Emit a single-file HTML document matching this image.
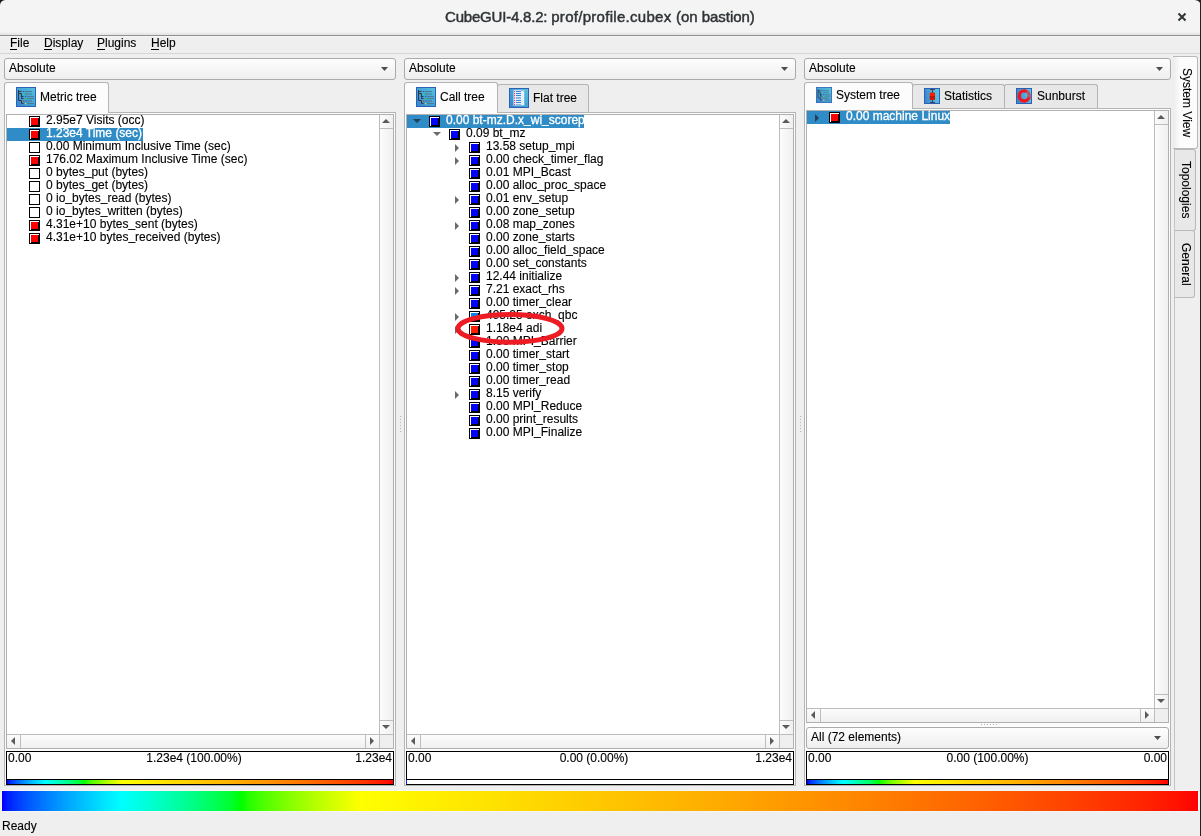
<!DOCTYPE html><html><head><meta charset="utf-8"><title>CubeGUI-4.8.2: prof/profile.cubex (on bastion)</title><style>
*{box-sizing:border-box;margin:0;padding:0}
html,body{width:1201px;height:836px;overflow:hidden;background:#efefef}
body{position:relative;font-family:"Liberation Sans",sans-serif;font-size:12px;color:#000;line-height:13px;-webkit-text-stroke:0.12px #000}
.a{position:absolute}
.t{position:absolute;white-space:nowrap}
#title{left:0;top:0;width:1201px;height:35px;background:linear-gradient(#f4f4f4 0,#f4f4f4 32px,#ececec 33px,#e3e3e3 35px)}
#titleline{left:0;top:35px;width:1201px;height:2px;background:linear-gradient(#91918d 0,#91918d 1px,#f5f5f5 1px)}
#titletxt{left:445px;top:8px;font-size:15px;line-height:18px;color:#2e3436;-webkit-text-stroke:0.45px #2e3436}
#menuline{left:0;top:53px;width:1200px;height:1px;background:#d6d6d6}
.menu{top:36px;font-size:12px;line-height:14px}
.menu u{text-decoration:none;position:relative}
.menu u::after{content:'';position:absolute;left:0;width:min(100%,8px);top:13px;height:1px;background:#000}
#w{position:absolute;left:0;top:0;width:1201px;height:836px;will-change:transform}
.combo{height:22px;border:1px solid #aaa;border-radius:3px;background:linear-gradient(#fefefe,#eeeeee)}
.combo span{position:absolute;left:4px;top:2px;line-height:14px}
.pane{border:1px solid #b4b4b4;background:#fcfcfc}
.frame{border:1px solid #b0b0b0;background:#fff}
.tab{border:1px solid #b4b4b4;border-bottom:none;border-radius:3px 3px 0 0}
.tab.sel{background:#fcfcfc}
.tab.un{background:#e8e8e8}
.row{position:absolute;height:13px;white-space:nowrap;line-height:13px}
.row i{font-style:normal;position:relative;top:-1px}
.hl{position:absolute;height:13px;background:#308cc6}
.ic{position:absolute;width:11px;height:11px;background:#000}
.ic i{position:absolute;left:1px;top:1px;width:9px;height:9px;background:#fff}
.ic b{position:absolute;left:2px;top:2px;width:8px;height:8px;border-right:1px solid #000;border-bottom:1px solid #000}
.vbox{border:1px solid #000;background:#fff}
.sb{background:linear-gradient(90deg,#fcfcfc,#f0f0f0)}
.sbh{background:linear-gradient(#fcfcfc,#f0f0f0)}
.ln{position:absolute;background:#bdbdbd}
.grad{background:linear-gradient(90deg,#0000ff 0%,#001dff 0.5%,#0031ff 1%,#0041ff 1.5%,#0050ff 2%,#005eff 2.5%,#006bff 3%,#0078ff 3.5%,#0084ff 4%,#0090ff 4.5%,#009bff 5%,#00a6ff 5.5%,#00b1ff 6%,#00bbff 6.5%,#00c5ff 7%,#00cfff 7.5%,#00d9ff 8%,#00e3ff 8.5%,#00ecff 9%,#00f6ff 9.5%,#00ffff 10%,#00fff6 10.5%,#00ffec 11%,#00ffe3 11.5%,#00ffd9 12%,#00ffcf 12.5%,#00ffc5 13%,#00ffbb 13.5%,#00ffb1 14%,#00ffa6 14.5%,#00ff9b 15%,#00ff90 15.5%,#00ff84 16%,#00ff78 16.5%,#00ff6b 17%,#00ff5e 17.5%,#00ff50 18%,#00ff41 18.5%,#00ff31 19%,#00ff1d 19.5%,#00ff00 20%,#1dff00 20.5%,#31ff00 21%,#41ff00 21.5%,#50ff00 22%,#5eff00 22.5%,#6bff00 23%,#78ff00 23.5%,#84ff00 24%,#90ff00 24.5%,#9bff00 25%,#a6ff00 25.5%,#b1ff00 26%,#bbff00 26.5%,#c5ff00 27%,#cfff00 27.5%,#d9ff00 28%,#e3ff00 28.5%,#ecff00 29%,#f6ff00 29.5%,#ffff00 30%,#fffb00 31.4%,#fff800 32.8%,#fff400 34.2%,#fff000 35.6%,#ffec00 37%,#ffe900 38.4%,#ffe500 39.8%,#ffe100 41.2%,#ffdd00 42.6%,#ffd900 44%,#ffd500 45.4%,#ffd100 46.8%,#ffcd00 48.2%,#ffc900 49.6%,#ffc500 51%,#ffc100 52.4%,#ffbd00 53.8%,#ffb900 55.2%,#ffb500 56.6%,#ffb100 58%,#ffac00 59.4%,#ffa800 60.8%,#ffa400 62.2%,#ff9f00 63.6%,#ff9b00 65%,#ff9600 66.4%,#ff9200 67.8%,#ff8d00 69.2%,#ff8900 70.6%,#ff8400 72%,#ff7f00 73.4%,#ff7a00 74.8%,#ff7500 76.2%,#ff7000 77.6%,#ff6b00 79%,#ff6600 80.4%,#ff6100 81.8%,#ff5b00 83.2%,#ff5600 84.6%,#ff5000 86%,#ff4a00 87.4%,#ff4400 88.8%,#ff3e00 90.2%,#ff3700 91.6%,#ff3100 93%,#ff2900 94.4%,#ff2200 95.8%,#ff1900 97.2%,#ff0f00 98.6%,#ff0000 100%)}
</style></head><body><div id="w">
<div class="a" id="title"></div><div class="a" id="titleline"></div>
<div class="t" id="titletxt"><span style="letter-spacing:-0.2px">CubeGUI-4.8.2: </span><span style="letter-spacing:0.29px">prof/profile.cubex </span><span style="letter-spacing:-0.03px">(on bastion)</span></div>
<svg class="a" style="left:1176px;top:11px" width="12" height="12" viewBox="0 0 12 12"><path d="M2.5 2.5L9.5 9.5M9.5 2.5L2.5 9.5" stroke="#2e3436" stroke-width="2" stroke-linecap="butt" fill="none"/></svg>
<svg class="a" style="left:0;top:0" width="6" height="6"><path d="M0 0H5.2A5.2 5.2 0 0 0 0 5.2Z" fill="#15191b"/></svg>
<svg class="a" style="left:1194px;top:0" width="7" height="7"><path d="M7 0H0.6A6.4 6.4 0 0 1 7 6.4Z" fill="#1e2426"/></svg>
<div class="a" style="left:1200px;top:0;width:1px;height:836px;background:#1e2426"></div>
<div class="t menu" style="left:10px"><u>F</u>ile</div>
<div class="t menu" style="left:44px"><u>D</u>isplay</div>
<div class="t menu" style="left:97px"><u>P</u>lugins</div>
<div class="t menu" style="left:151px"><u>H</u>elp</div>
<div class="a" id="menuline"></div>
<div class="a combo" style="left:4px;top:58px;width:392px"><span>Absolute</span></div><svg class="a" style="left:381px;top:67px" width="7" height="4"><path d="M0 0H7 L3.5 4 Z" fill="#4e4e4e"/></svg>
<div class="a pane" style="left:4px;top:112px;width:392px;height:674px"></div>
<div class="a tab sel" style="left:4px;top:82px;width:105px;height:31px"></div>
<svg class="a" style="left:16px;top:87px" width="20" height="20" viewBox="0 0 20 20">
<defs><linearGradient id="ga" x1="0" y1="1" x2="1" y2="0"><stop offset="0" stop-color="#3584cf"/><stop offset="1" stop-color="#55c3da"/></linearGradient></defs>
<rect x="0.5" y="0.5" width="19" height="19" fill="url(#ga)" stroke="#2d5fb6"/>
<path d="M2.5 3V13.5H5.5V16.5H7.5 M2.5 4.5H5.5 M2.5 6.5H5.5V11.5H7.5 M5.5 9.5H7.5" stroke="#2f3a46" stroke-width="1" fill="none"/>
<path d="M9 4.5H16 M9 7H16 M11 9.5H18 M11 11.5H18 M9 14H16 M11 16.5H18" stroke="#4d7d92" stroke-width="1" fill="none"/>
<rect x="7" y="4" width="1.2" height="1.2" fill="#3050e0"/><rect x="7" y="6.2" width="1.4" height="1.6" fill="#30e060"/>
<rect x="9" y="9" width="1.2" height="1.2" fill="#3050e0"/><rect x="9" y="11" width="1.6" height="1.4" fill="#20e040"/>
<rect x="7" y="13.4" width="1.2" height="1.4" fill="#d04050"/><rect x="9" y="16" width="1.4" height="1.4" fill="#e0d040"/>
</svg>
<div class="t" style="left:40px;top:90px;line-height:14px">Metric tree</div>
<div class="a frame" style="left:6px;top:114px;width:388px;height:635px"></div>
<div class="a sb" style="left:380px;top:115px;width:13px;height:619px"></div><div class="ln" style="left:379px;top:115px;width:1px;height:619px"></div><div class="ln" style="left:380px;top:128px;width:13px;height:1px"></div><div class="ln" style="left:380px;top:720px;width:13px;height:1px"></div><svg class="a" style="left:382px;top:119px" width="8" height="4"><path d="M0 4 H8 L4 0 Z" fill="#5a5a5a"/></svg><svg class="a" style="left:382px;top:725px" width="8" height="4"><path d="M0 0H8 L4 4 Z" fill="#5a5a5a"/></svg>
<div class="a sbh" style="left:7px;top:735px;width:373px;height:13px"></div><div class="ln" style="left:7px;top:734px;width:386px;height:1px"></div><div class="ln" style="left:20px;top:735px;width:1px;height:13px"></div><div class="ln" style="left:365px;top:735px;width:1px;height:13px"></div><svg class="a" style="left:11px;top:737px" width="4" height="8"><path d="M4 0V8 L0 4 Z" fill="#5a5a5a"/></svg><svg class="a" style="left:370px;top:737px" width="4" height="8"><path d="M0 0V8 L4 4 Z" fill="#5a5a5a"/></svg>
<div class="ln" style="left:379px;top:734px;width:1px;height:14px"></div>
<div class="a" style="left:380px;top:735px;width:13px;height:13px;background:#efefef"></div>
<div class="ic" style="left:29px;top:116px"><i></i><b style="background:#f00"></b></div>
<div class="row" style="left:46px;top:114px">2.95e7 Visits (occ)</div>
<div class="hl" style="left:7px;top:128px;width:136px"></div>
<div class="ic" style="left:29px;top:129px"><i></i><b style="background:#f00"></b></div>
<div class="row" style="left:46px;top:127px;color:#fff;-webkit-text-stroke:0.3px #fff">1.23e4 Time (sec)</div>
<div class="ic" style="left:29px;top:142px"><i></i></div>
<div class="row" style="left:46px;top:140px">0.00 Minimum Inclusive Time (sec)</div>
<div class="ic" style="left:29px;top:155px"><i></i><b style="background:#f00"></b></div>
<div class="row" style="left:46px;top:153px">176.02 Maximum Inclusive Time (sec)</div>
<div class="ic" style="left:29px;top:168px"><i></i></div>
<div class="row" style="left:46px;top:166px">0 bytes<i>_</i>put (bytes)</div>
<div class="ic" style="left:29px;top:181px"><i></i></div>
<div class="row" style="left:46px;top:179px">0 bytes<i>_</i>get (bytes)</div>
<div class="ic" style="left:29px;top:194px"><i></i></div>
<div class="row" style="left:46px;top:192px">0 io<i>_</i>bytes<i>_</i>read (bytes)</div>
<div class="ic" style="left:29px;top:207px"><i></i></div>
<div class="row" style="left:46px;top:205px">0 io<i>_</i>bytes<i>_</i>written (bytes)</div>
<div class="ic" style="left:29px;top:220px"><i></i><b style="background:#f00"></b></div>
<div class="row" style="left:46px;top:218px">4.31e+10 bytes<i>_</i>sent (bytes)</div>
<div class="ic" style="left:29px;top:233px"><i></i><b style="background:#f00"></b></div>
<div class="row" style="left:46px;top:231px">4.31e+10 bytes<i>_</i>received (bytes)</div>
<div class="a vbox" style="left:6px;top:751px;width:388px;height:34px"></div><div class="a" style="left:6px;top:779px;width:388px;height:1px;background:#000"></div><div class="a grad" style="left:7px;top:780px;width:386px;height:4px"></div><div class="t" style="left:8px;top:752px">0.00</div><div class="t" style="left:0px;top:752px;width:388px;text-align:center">1.23e4 (100.00%)</div><div class="t" style="right:809px;top:752px">1.23e4</div>
<div class="a combo" style="left:404px;top:58px;width:392px"><span>Absolute</span></div><svg class="a" style="left:781px;top:67px" width="7" height="4"><path d="M0 0H7 L3.5 4 Z" fill="#4e4e4e"/></svg>
<div class="a pane" style="left:404px;top:112px;width:392px;height:674px"></div>
<div class="a tab un" style="left:497px;top:84px;width:92px;height:28px"></div>
<div class="a tab sel" style="left:404px;top:82px;width:94px;height:31px"></div>
<svg class="a" style="left:416px;top:87px" width="20" height="20" viewBox="0 0 20 20">
<defs><linearGradient id="gb" x1="0" y1="1" x2="1" y2="0"><stop offset="0" stop-color="#3584cf"/><stop offset="1" stop-color="#55c3da"/></linearGradient></defs>
<rect x="0.5" y="0.5" width="19" height="19" fill="url(#gb)" stroke="#2d5fb6"/>
<path d="M2.5 3V13.5H5.5V16.5H7.5 M2.5 4.5H5.5 M2.5 6.5H5.5V11.5H7.5 M5.5 9.5H7.5" stroke="#2f3a46" stroke-width="1" fill="none"/>
<path d="M9 4.5H16 M9 7H16 M11 9.5H18 M11 11.5H18 M9 14H16 M11 16.5H18" stroke="#4d7d92" stroke-width="1" fill="none"/>
<rect x="7" y="4" width="1.2" height="1.2" fill="#3050e0"/><rect x="7" y="6.2" width="1.4" height="1.6" fill="#30e060"/>
<rect x="9" y="9" width="1.2" height="1.2" fill="#3050e0"/><rect x="9" y="11" width="1.6" height="1.4" fill="#20e040"/>
<rect x="7" y="13.4" width="1.2" height="1.4" fill="#d04050"/><rect x="9" y="16" width="1.4" height="1.4" fill="#e0d040"/>
</svg>
<div class="t" style="left:440px;top:90px;line-height:14px">Call tree</div>
<svg class="a" style="left:509px;top:88px" width="20" height="20" viewBox="0 0 20 20">
<defs><linearGradient id="gf" x1="0" y1="1" x2="1" y2="0"><stop offset="0" stop-color="#3584cf"/><stop offset="1" stop-color="#55c3da"/></linearGradient></defs>
<rect x="0.5" y="0.5" width="19" height="19" fill="url(#gf)" stroke="#2d5fb6"/>
<rect x="4.3" y="2" width="11" height="15.6" fill="#e6f0fa"/>
<rect x="4.3" y="2" width="11" height="15.6" fill="none" stroke="#7ab4e6" stroke-width="0.6"/>
<path d="M7 3.5H12 M7 5.5H12 M7 7.5H12 M7 12.5H12 M7 14.5H12" stroke="#3586d6" stroke-width="1"/>
<path d="M7 9.5H12 M7 10.5H12 M7 16.5H12" stroke="#8ab8e4" stroke-width="1"/>
<path d="M12.6 2.6H14.8" stroke="#8ab8e4" stroke-width="1"/>
<g fill="#f04454"><rect x="5" y="3" width="1.1" height="1.1"/><rect x="5" y="5" width="1.1" height="1.1"/><rect x="5" y="7" width="1.1" height="1.1"/><rect x="5" y="12" width="1.1" height="1.1"/><rect x="5" y="14" width="1.1" height="1.1"/><rect x="5" y="16" width="1.1" height="1.1"/></g>
<rect x="5" y="9" width="1.1" height="2" fill="#f08090"/>
</svg>
<div class="t" style="left:533px;top:91px;line-height:14px">Flat tree</div>
<div class="a frame" style="left:406px;top:114px;width:388px;height:635px"></div>
<div class="a sb" style="left:780px;top:115px;width:13px;height:619px"></div><div class="ln" style="left:779px;top:115px;width:1px;height:619px"></div><div class="ln" style="left:780px;top:128px;width:13px;height:1px"></div><div class="ln" style="left:780px;top:720px;width:13px;height:1px"></div><svg class="a" style="left:782px;top:119px" width="8" height="4"><path d="M0 4 H8 L4 0 Z" fill="#5a5a5a"/></svg><svg class="a" style="left:782px;top:725px" width="8" height="4"><path d="M0 0H8 L4 4 Z" fill="#5a5a5a"/></svg>
<div class="a sbh" style="left:407px;top:735px;width:373px;height:13px"></div><div class="ln" style="left:407px;top:734px;width:386px;height:1px"></div><div class="ln" style="left:420px;top:735px;width:1px;height:13px"></div><div class="ln" style="left:765px;top:735px;width:1px;height:13px"></div><svg class="a" style="left:411px;top:737px" width="4" height="8"><path d="M4 0V8 L0 4 Z" fill="#5a5a5a"/></svg><svg class="a" style="left:770px;top:737px" width="4" height="8"><path d="M0 0V8 L4 4 Z" fill="#5a5a5a"/></svg>
<div class="ln" style="left:779px;top:734px;width:1px;height:14px"></div>
<div class="a" style="left:780px;top:735px;width:13px;height:13px;background:#efefef"></div>
<div class="hl" style="left:407px;top:115px;width:177px"></div>
<svg class="a" style="left:413px;top:119px" width="8" height="4"><path d="M0 0H8 L4 4 Z" fill="#1f3f5a"/></svg>
<div class="ic" style="left:429px;top:116px"><i></i><b style="background:#00f"></b></div>
<div class="row" style="left:446px;top:114px;color:#fff;-webkit-text-stroke:0.3px #fff">0.00 bt-mz.D.x<i>_</i>wi<i>_</i>scorep</div>
<svg class="a" style="left:433px;top:132px" width="8" height="4"><path d="M0 0H8 L4 4 Z" fill="#6a6a6a"/></svg>
<div class="ic" style="left:449px;top:129px"><i></i><b style="background:#00f"></b></div>
<div class="row" style="left:466px;top:127px">0.09 bt<i>_</i>mz</div>
<svg class="a" style="left:455px;top:144px" width="4" height="8"><path d="M0 0V8 L4 4 Z" fill="#6a6a6a"/></svg>
<div class="ic" style="left:469px;top:142px"><i></i><b style="background:#00f"></b></div>
<div class="row" style="left:486px;top:140px">13.58 setup<i>_</i>mpi</div>
<svg class="a" style="left:455px;top:157px" width="4" height="8"><path d="M0 0V8 L4 4 Z" fill="#6a6a6a"/></svg>
<div class="ic" style="left:469px;top:155px"><i></i><b style="background:#00f"></b></div>
<div class="row" style="left:486px;top:153px">0.00 check<i>_</i>timer<i>_</i>flag</div>
<div class="ic" style="left:469px;top:168px"><i></i><b style="background:#00f"></b></div>
<div class="row" style="left:486px;top:166px">0.01 MPI<i>_</i>Bcast</div>
<div class="ic" style="left:469px;top:181px"><i></i><b style="background:#00f"></b></div>
<div class="row" style="left:486px;top:179px">0.00 alloc<i>_</i>proc<i>_</i>space</div>
<svg class="a" style="left:455px;top:196px" width="4" height="8"><path d="M0 0V8 L4 4 Z" fill="#6a6a6a"/></svg>
<div class="ic" style="left:469px;top:194px"><i></i><b style="background:#00f"></b></div>
<div class="row" style="left:486px;top:192px">0.01 env<i>_</i>setup</div>
<div class="ic" style="left:469px;top:207px"><i></i><b style="background:#00f"></b></div>
<div class="row" style="left:486px;top:205px">0.00 zone<i>_</i>setup</div>
<svg class="a" style="left:455px;top:222px" width="4" height="8"><path d="M0 0V8 L4 4 Z" fill="#6a6a6a"/></svg>
<div class="ic" style="left:469px;top:220px"><i></i><b style="background:#00f"></b></div>
<div class="row" style="left:486px;top:218px">0.08 map<i>_</i>zones</div>
<div class="ic" style="left:469px;top:233px"><i></i><b style="background:#00f"></b></div>
<div class="row" style="left:486px;top:231px">0.00 zone<i>_</i>starts</div>
<div class="ic" style="left:469px;top:246px"><i></i><b style="background:#00f"></b></div>
<div class="row" style="left:486px;top:244px">0.00 alloc<i>_</i>field<i>_</i>space</div>
<div class="ic" style="left:469px;top:259px"><i></i><b style="background:#00f"></b></div>
<div class="row" style="left:486px;top:257px">0.00 set<i>_</i>constants</div>
<svg class="a" style="left:455px;top:274px" width="4" height="8"><path d="M0 0V8 L4 4 Z" fill="#6a6a6a"/></svg>
<div class="ic" style="left:469px;top:272px"><i></i><b style="background:#00f"></b></div>
<div class="row" style="left:486px;top:270px">12.44 initialize</div>
<svg class="a" style="left:455px;top:287px" width="4" height="8"><path d="M0 0V8 L4 4 Z" fill="#6a6a6a"/></svg>
<div class="ic" style="left:469px;top:285px"><i></i><b style="background:#00f"></b></div>
<div class="row" style="left:486px;top:283px">7.21 exact<i>_</i>rhs</div>
<div class="ic" style="left:469px;top:298px"><i></i><b style="background:#00f"></b></div>
<div class="row" style="left:486px;top:296px">0.00 timer<i>_</i>clear</div>
<svg class="a" style="left:455px;top:313px" width="4" height="8"><path d="M0 0V8 L4 4 Z" fill="#6a6a6a"/></svg>
<div class="ic" style="left:469px;top:311px"><i></i><b style="background:#0085ff"></b></div>
<div class="row" style="left:486px;top:309px">495.25 exch<i>_</i>qbc</div>
<svg class="a" style="left:455px;top:326px" width="4" height="8"><path d="M0 0V8 L4 4 Z" fill="#6a6a6a"/></svg>
<div class="ic" style="left:469px;top:324px"><i></i><b style="background:#ff1e00"></b></div>
<div class="row" style="left:486px;top:322px">1.18e4 adi</div>
<div class="ic" style="left:469px;top:337px"><i></i><b style="background:#00f"></b></div>
<div class="row" style="left:486px;top:335px">1.00 MPI<i>_</i>Barrier</div>
<div class="ic" style="left:469px;top:350px"><i></i><b style="background:#00f"></b></div>
<div class="row" style="left:486px;top:348px">0.00 timer<i>_</i>start</div>
<div class="ic" style="left:469px;top:363px"><i></i><b style="background:#00f"></b></div>
<div class="row" style="left:486px;top:361px">0.00 timer<i>_</i>stop</div>
<div class="ic" style="left:469px;top:376px"><i></i><b style="background:#00f"></b></div>
<div class="row" style="left:486px;top:374px">0.00 timer<i>_</i>read</div>
<svg class="a" style="left:455px;top:391px" width="4" height="8"><path d="M0 0V8 L4 4 Z" fill="#6a6a6a"/></svg>
<div class="ic" style="left:469px;top:389px"><i></i><b style="background:#00f"></b></div>
<div class="row" style="left:486px;top:387px">8.15 verify</div>
<div class="ic" style="left:469px;top:402px"><i></i><b style="background:#00f"></b></div>
<div class="row" style="left:486px;top:400px">0.00 MPI<i>_</i>Reduce</div>
<div class="ic" style="left:469px;top:415px"><i></i><b style="background:#00f"></b></div>
<div class="row" style="left:486px;top:413px">0.00 print<i>_</i>results</div>
<div class="ic" style="left:469px;top:428px"><i></i><b style="background:#00f"></b></div>
<div class="row" style="left:486px;top:426px">0.00 MPI<i>_</i>Finalize</div>
<svg class="a" style="left:450px;top:306px" width="120" height="44"><ellipse cx="60" cy="22.4" rx="52" ry="13.85" fill="none" stroke="#ed1c24" stroke-width="5"/></svg>
<div class="a vbox" style="left:406px;top:751px;width:388px;height:34px"></div><div class="a" style="left:406px;top:779px;width:388px;height:1px;background:#000"></div><div class="a" style="left:406px;top:780px;width:1px;height:4px;background:#0018ff"></div><div class="t" style="left:408px;top:752px">0.00</div><div class="t" style="left:400px;top:752px;width:388px;text-align:center">0.00 (0.00%)</div><div class="t" style="right:409px;top:752px">1.23e4</div>
<div class="a combo" style="left:804px;top:58px;width:367px"><span>Absolute</span></div><svg class="a" style="left:1156px;top:67px" width="7" height="4"><path d="M0 0H7 L3.5 4 Z" fill="#4e4e4e"/></svg>
<div class="a pane" style="left:804px;top:108px;width:367px;height:678px"></div>
<div class="a tab un" style="left:912px;top:84px;width:93px;height:24px"></div>
<div class="a tab un" style="left:1004px;top:84px;width:94px;height:24px"></div>
<div class="a tab sel" style="left:804px;top:82px;width:109px;height:27px"></div>
<svg class="a" style="left:816px;top:87px" width="16" height="16" viewBox="0 0 20 20">
<defs><linearGradient id="gc" x1="0" y1="1" x2="1" y2="0"><stop offset="0" stop-color="#3584cf"/><stop offset="1" stop-color="#55c3da"/></linearGradient></defs>
<rect x="0.5" y="0.5" width="19" height="19" fill="url(#gc)" stroke="#2d5fb6"/>
<path d="M2.5 3V13.5H5.5V16.5H7.5 M2.5 4.5H5.5 M2.5 6.5H5.5V11.5H7.5 M5.5 9.5H7.5" stroke="#2f3a46" stroke-width="1" fill="none"/>
<path d="M9 4.5H16 M9 7H16 M11 9.5H18 M11 11.5H18 M9 14H16 M11 16.5H18" stroke="#4d7d92" stroke-width="1" fill="none"/>
<rect x="7" y="4" width="1.2" height="1.2" fill="#3050e0"/><rect x="7" y="6.2" width="1.4" height="1.6" fill="#30e060"/>
<rect x="9" y="9" width="1.2" height="1.2" fill="#3050e0"/><rect x="9" y="11" width="1.6" height="1.4" fill="#20e040"/>
<rect x="7" y="13.4" width="1.2" height="1.4" fill="#d04050"/><rect x="9" y="16" width="1.4" height="1.4" fill="#e0d040"/>
</svg>
<div class="t" style="left:836px;top:88px;line-height:14px">System tree</div>
<svg class="a" style="left:924px;top:88px" width="16" height="16" viewBox="0 0 16 16">
<defs><linearGradient id="gs" x1="0" y1="0.2" x2="1" y2="0"><stop offset="0" stop-color="#3b8acb"/><stop offset="0.55" stop-color="#4fb4e4"/><stop offset="1" stop-color="#5fc8dc"/></linearGradient>
<linearGradient id="gr" x1="0" y1="0" x2="0" y2="1"><stop offset="0" stop-color="#ff1a00"/><stop offset="0.45" stop-color="#ff1a00"/><stop offset="0.46" stop-color="#b41800"/><stop offset="1" stop-color="#e41000"/></linearGradient></defs>
<rect x="0.5" y="0.5" width="15" height="15" fill="url(#gs)" stroke="#2f5fb6"/>
<path d="M8.5 1.5V14.5 M6 1.5H11 M6 14.5H11" stroke="#3a4450" stroke-width="1"/>
<rect x="5.7" y="4.6" width="5.3" height="7.3" fill="url(#gr)"/>
</svg>
<div class="t" style="left:944px;top:89px;line-height:14px">Statistics</div>
<svg class="a" style="left:1016px;top:88px" width="16" height="16" viewBox="0 0 16 16">
<defs><linearGradient id="gu" x1="0" y1="0.2" x2="1" y2="0"><stop offset="0" stop-color="#3b8acb"/><stop offset="0.55" stop-color="#4fb0dc"/><stop offset="1" stop-color="#5fc8dc"/></linearGradient></defs>
<rect x="0.5" y="0.5" width="15" height="15" fill="url(#gu)" stroke="#2f5fb6"/>
<circle cx="8.2" cy="7.9" r="4.9" fill="none" stroke="#ef1620" stroke-width="3.2"/>
<circle cx="8.2" cy="7.9" r="6.3" fill="none" stroke="#e8202c" stroke-width="1.1" stroke-dasharray="1.6 1"/>
<path d="M8.2 7.9 L11.5 1.5 A7.3 7.3 0 0 1 15.3 10 Z" fill="#58bce0" opacity="0.38"/>
<path d="M11.4 8.6 L14.6 10.6" stroke="#e04048" stroke-width="0.9"/>
</svg>
<div class="t" style="left:1037px;top:89px;line-height:14px">Sunburst</div>
<div class="a frame" style="left:806px;top:110px;width:363px;height:613px"></div>
<div class="hl" style="left:807px;top:111px;width:143px"></div>
<svg class="a" style="left:815px;top:114px" width="4" height="8"><path d="M0 0V8 L4 4 Z" fill="#1f3f5a"/></svg>
<div class="ic" style="left:829px;top:112px"><i></i><b style="background:#f00"></b></div>
<div class="row" style="left:846px;top:110px;color:#fff;-webkit-text-stroke:0.3px #fff">0.00 machine Linux</div>
<div class="a sb" style="left:1155px;top:111px;width:13px;height:597px"></div><div class="ln" style="left:1154px;top:111px;width:1px;height:597px"></div><div class="ln" style="left:1155px;top:124px;width:13px;height:1px"></div><div class="ln" style="left:1155px;top:694px;width:13px;height:1px"></div><svg class="a" style="left:1157px;top:115px" width="8" height="4"><path d="M0 4 H8 L4 0 Z" fill="#5a5a5a"/></svg><svg class="a" style="left:1157px;top:699px" width="8" height="4"><path d="M0 0H8 L4 4 Z" fill="#5a5a5a"/></svg>
<div class="a sbh" style="left:807px;top:709px;width:348px;height:13px"></div><div class="ln" style="left:807px;top:708px;width:361px;height:1px"></div><div class="ln" style="left:820px;top:709px;width:1px;height:13px"></div><div class="ln" style="left:1140px;top:709px;width:1px;height:13px"></div><svg class="a" style="left:811px;top:711px" width="4" height="8"><path d="M4 0V8 L0 4 Z" fill="#5a5a5a"/></svg><svg class="a" style="left:1145px;top:711px" width="4" height="8"><path d="M0 0V8 L4 4 Z" fill="#5a5a5a"/></svg>
<div class="ln" style="left:1154px;top:708px;width:1px;height:14px"></div>
<div class="a" style="left:1155px;top:709px;width:13px;height:13px;background:#efefef"></div>
<div class="a combo" style="left:806px;top:727px;width:363px;height:22px"><span>All (72 elements)</span></div>
<svg class="a" style="left:1154px;top:736px" width="7" height="4"><path d="M0 0H7 L3.5 4 Z" fill="#4e4e4e"/></svg>
<div class="a vbox" style="left:806px;top:751px;width:363px;height:34px"></div><div class="a" style="left:806px;top:779px;width:363px;height:1px;background:#000"></div><div class="a grad" style="left:807px;top:780px;width:361px;height:4px"></div><div class="t" style="left:808px;top:752px">0.00</div><div class="t" style="left:806px;top:752px;width:363px;text-align:center">0.00 (100.00%)</div><div class="t" style="right:34px;top:752px">0.00</div>
<div class="a" style="left:1174px;top:149px;width:1px;height:641px;background:#c4c4c4"></div>
<div class="a" style="left:1174px;top:149px;width:22px;height:82px;background:#e8e8e8;border:1px solid #b8b8b8;border-left-color:#c6c6c6;border-radius:0 3px 3px 0"></div>
<div class="a" style="left:1174px;top:230px;width:21px;height:68px;background:#e8e8e8;border:1px solid #b8b8b8;border-left-color:#c6c6c6;border-radius:0 3px 3px 0"></div>
<div class="a" style="left:1173px;top:56px;width:25px;height:93px;background:linear-gradient(90deg,#ececec,#fcfcfc 30%);border:1px solid #b8b8b8;border-left:none;border-radius:0 3px 3px 0"></div>
<div class="t" style="left:1194px;top:68px;transform-origin:0 0;transform:rotate(90deg);line-height:14px">System View</div>
<div class="t" style="left:1193px;top:161px;transform-origin:0 0;transform:rotate(90deg);line-height:14px">Topologies</div>
<div class="t" style="left:1193px;top:243px;transform-origin:0 0;transform:rotate(90deg);line-height:14px">General</div>
<div class="a" style="left:400px;top:416px;width:1px;height:1px;background:#b4b4b4"></div>
<div class="a" style="left:400px;top:419px;width:1px;height:1px;background:#b4b4b4"></div>
<div class="a" style="left:400px;top:422px;width:1px;height:1px;background:#b4b4b4"></div>
<div class="a" style="left:400px;top:425px;width:1px;height:1px;background:#b4b4b4"></div>
<div class="a" style="left:400px;top:428px;width:1px;height:1px;background:#b4b4b4"></div>
<div class="a" style="left:400px;top:431px;width:1px;height:1px;background:#b4b4b4"></div>
<div class="a" style="left:800px;top:416px;width:1px;height:1px;background:#b4b4b4"></div>
<div class="a" style="left:800px;top:419px;width:1px;height:1px;background:#b4b4b4"></div>
<div class="a" style="left:800px;top:422px;width:1px;height:1px;background:#b4b4b4"></div>
<div class="a" style="left:800px;top:425px;width:1px;height:1px;background:#b4b4b4"></div>
<div class="a" style="left:800px;top:428px;width:1px;height:1px;background:#b4b4b4"></div>
<div class="a" style="left:800px;top:431px;width:1px;height:1px;background:#b4b4b4"></div>
<div class="a" style="left:981px;top:724px;width:1px;height:1px;background:#b4b4b4"></div>
<div class="a" style="left:984px;top:724px;width:1px;height:1px;background:#b4b4b4"></div>
<div class="a" style="left:987px;top:724px;width:1px;height:1px;background:#b4b4b4"></div>
<div class="a" style="left:990px;top:724px;width:1px;height:1px;background:#b4b4b4"></div>
<div class="a" style="left:993px;top:724px;width:1px;height:1px;background:#b4b4b4"></div>
<div class="a" style="left:996px;top:724px;width:1px;height:1px;background:#b4b4b4"></div>
<div class="a" style="left:1px;top:790px;width:1198px;height:22px;background:#f5f5f3"></div>
<div class="a grad" style="left:2px;top:791px;width:1196px;height:20px"></div>
<div class="t" style="left:2px;top:819px;line-height:14px">Ready</div>
</div></body></html>
